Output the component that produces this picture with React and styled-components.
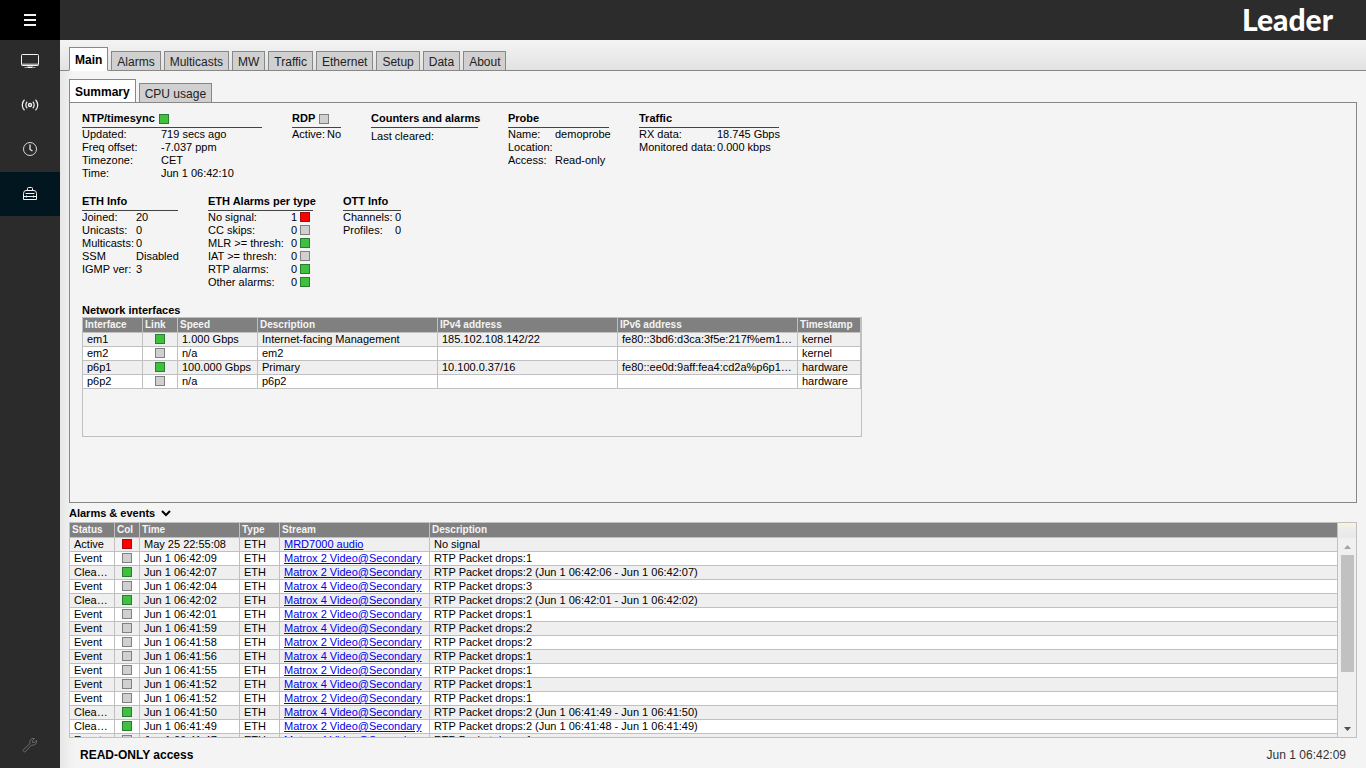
import React from "react";
import styled, { createGlobalStyle, css } from "styled-components";

const GlobalStyle = createGlobalStyle`
  * { box-sizing: border-box; }
  html, body, #root { height: 100%; }
  body {
    margin: 0;
    background: #f4f4f4;
    color: #000;
    font-family: "Liberation Sans", Arial, sans-serif;
    font-size: 11px;
    line-height: 13px;
  }
  button { font: inherit; color: inherit; border: 0; padding: 0; background: none; cursor: pointer; }
`;

const Shell = styled.div`
  display: flex;
  height: 100vh;
`;

const Sidebar = styled.nav`
  display: flex;
  flex-direction: column;
  flex: none;
  width: 60px;
  background: #2b2b2b;
`;

const SideButton = styled.button`
  display: flex;
  align-items: center;
  justify-content: center;
  height: ${(p) => (p.$menu ? 40 : 44)}px;
  padding-bottom: ${(p) => (p.$menu ? 0 : 2)}px;
  background: ${(p) => (p.$menu ? "#000" : p.$active ? "#02161f" : "transparent")};
  color: ${(p) => (p.$dim ? "#6e6e6e" : "#f4f4f4")};
  svg { display: block; }
`;

const Spacer = styled.div`
  flex: 1;
`;

const Column = styled.div`
  display: flex;
  flex-direction: column;
  flex: 1;
  min-width: 0;
`;

const TopBar = styled.header`
  display: flex;
  align-items: flex-start;
  justify-content: flex-end;
  flex: none;
  height: 40px;
  padding-right: 33px;
  background: #2c2c2c;
`;

const Logo = styled.span`
  font-family: Lato, sans-serif;
  font-size: 30px;
  line-height: 38px;
  font-weight: 900;
  color: #fff;
`;

const Page = styled.div`
  display: flex;
  flex-direction: column;
  flex: 1;
  min-height: 0;
  background: linear-gradient(to right, #e6e6e6, #f4f4f4 14px);
`;

const TabBar = styled.div`
  display: flex;
  align-items: flex-end;
  gap: 3px;
  flex: none;
`;

const MainTabs = styled(TabBar)`
  height: 31px;
  padding: 0 9px;
  border-bottom: 1px solid #888;
  background: linear-gradient(#f4f4f4, #e2e2e2);
`;

const SubTabs = styled(TabBar)`
  margin-top: 8px;
`;

const Tab = styled.button`
  height: 20px;
  margin-bottom: -1px;
  padding: 2px 5px 0;
  border: 1px solid #888;
  background: #d0d0d0;
  color: #222;
  font-size: 12px;
  line-height: 16px;
  ${(p) =>
    p.$active &&
    css`
      height: 24px;
      padding-bottom: 1px;
      border-bottom-color: #fff;
      background: #fff;
      color: #000;
      font-weight: 700;
    `}
`;

const Body = styled.main`
  display: flex;
  flex-direction: column;
  flex: 1;
  min-height: 0;
  padding: 0 9px;
`;

const Panel = styled.section`
  flex: none;
  min-height: 401px;
  padding: 9px 12px;
  border: 1px solid #888;
  background: #f4f4f4;
`;

const GroupRow = styled.div`
  display: flex;
  align-items: flex-start;
  gap: 30px;
  margin-bottom: 15px;
`;

const Group = styled.section`
  flex: none;
  width: ${(p) => p.$width}px;
`;

const Heading = styled.h2`
  display: flex;
  align-items: center;
  gap: 4px;
  margin: 0;
  font-size: 11px;
  line-height: 13px;
  font-weight: 700;
  white-space: nowrap;
`;

const GroupHeading = styled(Heading)`
  padding-bottom: 2px;
  border-bottom: 1px solid #444;
`;

const Pairs = styled.dl`
  display: grid;
  grid-template-columns: ${(p) => p.$label}px 1fr;
  margin: 0;
  padding-top: ${(p) => p.$top || 0}px;
  dt, dd { margin: 0; min-height: 13px; white-space: nowrap; }
`;

const lampColors = {
  green: ["#3fc13f", "#2a7d2e"],
  grey: ["#d0d0d0", "#808080"],
  red: ["#ff0000", "#a01010"],
};

const Lamp = styled.span`
  display: block;
  flex: none;
  width: 10px;
  height: 10px;
  border: 1px solid ${(p) => lampColors[p.$color][1]};
  background: ${(p) => lampColors[p.$color][0]};
`;

const Count = styled.dd`
  display: flex;
  align-items: flex-start;
  justify-content: flex-end;
  gap: 3px;
  padding-right: 3px;
  ${Lamp} { margin-top: 1px; }
`;

const Table = styled.table`
  width: 100%;
  table-layout: fixed;
  border-collapse: separate;
  border-spacing: 0;

  th, td {
    overflow: hidden;
    text-align: left;
    vertical-align: top;
    text-overflow: ellipsis;
    white-space: nowrap;
    border: solid #c0c0c0;
    border-width: 0 1px 1px 0;
  }
  th {
    height: 15px;
    padding: 0 2px;
    background: #808080;
    color: #f4f4f4;
    font-size: 10px;
    line-height: 13px;
    font-weight: 700;
  }
  td {
    height: 14px;
    padding: 0 4px;
    line-height: 13px;
  }
  tbody tr { background: #fff; }
  tbody tr:nth-child(odd) { background: #efefef; }
  td ${Lamp} { margin: 1px auto 0; }
  a { color: #0000ee; }
`;

const InterfaceBox = styled.div`
  max-width: 780px;
  min-height: 120px;
  border: 1px solid #c0c0c0;
`;

const EventsHeading = styled(Heading)`
  flex: none;
  height: 19px;
  gap: 6px;
  padding-top: 2px;
`;

const EventsBox = styled.div`
  display: flex;
  flex: 1;
  min-height: 0;
  border: 1px solid #c0c0c0;
`;

const EventsView = styled.div`
  flex: 1;
  min-width: 0;
  overflow: hidden;
`;

const ScrollColumn = styled.div`
  display: flex;
  flex-direction: column;
  flex: none;
  width: 18px;
  background: #f0f0f0;
`;

const ScrollCorner = styled.div`
  height: 15px;
  background: linear-gradient(#fdf3dd, #ececec 6px, #e8e8e8);
`;

const ScrollButton = styled.button`
  display: flex;
  align-items: center;
  justify-content: center;
  height: 17px;
  color: ${(p) => (p.$dim ? "#a3a3a3" : "#505050")};
`;

const Track = styled.div`
  flex: 1;
  padding: 0 2px 0 3px;
`;

const Thumb = styled.div`
  height: 71%;
  background: #c1c1c1;
`;

const Footer = styled.footer`
  display: flex;
  align-items: center;
  justify-content: space-between;
  flex: none;
  height: 30px;
  padding: 5px 20px 0;
  font-size: 12px;
  line-height: 15px;
  color: #333;
  strong { color: #000; }
`;

const stroke = { fill: "none", stroke: "currentColor", strokeWidth: 1 };

const MenuIcon = () => (
  <svg width="12" height="12" viewBox="0 0 12 12" aria-hidden="true">
    <path d="M0 1h12M0 6h12M0 11h12" stroke="currentColor" strokeWidth="2" />
  </svg>
);

const MonitorIcon = () => (
  <svg width="18" height="16" viewBox="0 0 18 16" aria-hidden="true">
    <rect x="0.5" y="1.5" width="17" height="11" rx="0.8" {...stroke} />
    <path d="M1 11.5h16" stroke="currentColor" strokeOpacity="0.6" strokeWidth="2" />
    <path d="M6 13.5h6" stroke="currentColor" strokeOpacity="0.4" />
    <path d="M3.500 14.5h11" stroke="currentColor" strokeOpacity="0.6" />
    <path d="M7 14.5h4" stroke="currentColor" />
  </svg>
);

const SignalIcon = () => (
  <svg width="18" height="14" viewBox="0 0 18 14" aria-hidden="true">
    <circle cx="9" cy="7" r="1.5" {...stroke} strokeWidth="1.4" />
    <path d="M6.2 3.8a4.4 4.4 0 0 0 0 6.4M11.8 3.8a4.4 4.4 0 0 1 0 6.4M3.5 1.7a7.4 7.4 0 0 0 0 10.6M14.5 1.7a7.4 7.4 0 0 1 0 10.6" {...stroke} strokeWidth="1.2" />
  </svg>
);

const ClockIcon = () => (
  <svg width="16" height="16" viewBox="0 0 16 16" aria-hidden="true">
    <circle cx="8" cy="8" r="6.5" {...stroke} strokeOpacity="0.85" />
    <path d="M8 3.5v5l2.5 1.500" {...stroke} strokeWidth="1.2" />
  </svg>
);

const ToolboxIcon = () => (
  <svg width="16" height="16" viewBox="0 0 16 16" aria-hidden="true">
    <path d="M5.5 5V3.5q0-1 1-1h3q1 0 1 1V5M4 5.5h8q2.500 0 2.500 3v6h-13v-6q0-3 2.500-3zM3.500 8.500h9M1.500 11.500h13M4.500 10.500v2M11.500 10.500v2" {...stroke} />
  </svg>
);

const WrenchIcon = () => (
  <svg width="16" height="16" viewBox="0 0 16 16" aria-hidden="true">
    <path d="M12.6 1.5a3.8 3.8 0 0 0-4.6 5L1.6 12.4a1.4 1.4 0 0 0 2 2L9.6 8a3.8 3.8 0 0 0 4.9-4.6L12.3 5.5 10.5 5.3 10.4 3.7z" {...stroke} />
  </svg>
);

const ChevronIcon = () => (
  <svg width="10" height="7" viewBox="0 0 10 7" aria-hidden="true">
    <path d="M1 1l4 4 4-4" fill="none" stroke="currentColor" strokeWidth="2" />
  </svg>
);

const Arrow = ({ down }) => (
  <svg width="7" height="4" viewBox="0 0 7 4" aria-hidden="true">
    <path d={down ? "M0 0h7L3.5 4z" : "M0 4h7L3.5 0z"} fill="currentColor" />
  </svg>
);

const mainTabs = ["Main", "Alarms", "Multicasts", "MW", "Traffic", "Ethernet", "Setup", "Data", "About"];

const alarmCounts = [
  ["No signal:", 1, "red"],
  ["CC skips:", 0, "grey"],
  ["MLR >= thresh:", 0, "green"],
  ["IAT >= thresh:", 0, "grey"],
  ["RTP alarms:", 0, "green"],
  ["Other alarms:", 0, "green"],
];

const interfaces = [
  ["em1", "green", "1.000 Gbps", "Internet-facing Management", "185.102.108.142/22", "fe80::3bd6:d3ca:3f5e:217f%em1/64", "kernel"],
  ["em2", "grey", "n/a", "em2", "", "", "kernel"],
  ["p6p1", "green", "100.000 Gbps", "Primary", "10.100.0.37/16", "fe80::ee0d:9aff:fea4:cd2a%p6p1/64", "hardware"],
  ["p6p2", "grey", "n/a", "p6p2", "", "", "hardware"],
];

const m2 = "Matrox 2 Video@Secondary";
const m4 = "Matrox 4 Video@Secondary";

const events = [
  ["Active", "red", "May 25 22:55:08", "MRD7000 audio", "No signal"],
  ["Event", "grey", "Jun 1 06:42:09", m2, "RTP Packet drops:1"],
  ["Cleared", "green", "Jun 1 06:42:07", m2, "RTP Packet drops:2 (Jun 1 06:42:06 - Jun 1 06:42:07)"],
  ["Event", "grey", "Jun 1 06:42:04", m4, "RTP Packet drops:3"],
  ["Cleared", "green", "Jun 1 06:42:02", m4, "RTP Packet drops:2 (Jun 1 06:42:01 - Jun 1 06:42:02)"],
  ["Event", "grey", "Jun 1 06:42:01", m2, "RTP Packet drops:1"],
  ["Event", "grey", "Jun 1 06:41:59", m4, "RTP Packet drops:2"],
  ["Event", "grey", "Jun 1 06:41:58", m2, "RTP Packet drops:2"],
  ["Event", "grey", "Jun 1 06:41:56", m4, "RTP Packet drops:1"],
  ["Event", "grey", "Jun 1 06:41:55", m2, "RTP Packet drops:1"],
  ["Event", "grey", "Jun 1 06:41:52", m4, "RTP Packet drops:1"],
  ["Event", "grey", "Jun 1 06:41:52", m2, "RTP Packet drops:1"],
  ["Cleared", "green", "Jun 1 06:41:50", m4, "RTP Packet drops:2 (Jun 1 06:41:49 - Jun 1 06:41:50)"],
  ["Cleared", "green", "Jun 1 06:41:49", m2, "RTP Packet drops:2 (Jun 1 06:41:48 - Jun 1 06:41:49)"],
  ["Event", "grey", "Jun 1 06:41:47", m4, "RTP Packet drops:1"],
];

const InfoGroup = ({ title, lamp, width, label, top, rows }) => (
  <Group $width={width}>
    <GroupHeading>
      {title}
      {lamp && <Lamp $color={lamp} />}
    </GroupHeading>
    <Pairs $label={label} $top={top}>
      {rows.map(([name, value]) => (
        <React.Fragment key={name}>
          <dt>{name}</dt>
          <dd>{value}</dd>
        </React.Fragment>
      ))}
    </Pairs>
  </Group>
);

const TableHead = ({ columns }) => (
  <>
    <colgroup>
      {columns.map(([name, width]) => (
        <col key={name} width={width} />
      ))}
    </colgroup>
    <thead>
      <tr>
        {columns.map(([name]) => (
          <th key={name} scope="col">{name}</th>
        ))}
      </tr>
    </thead>
  </>
);

export default function App() {
  return (
    <>
      <GlobalStyle />
      <Shell>
        <Sidebar>
          <SideButton $menu aria-label="Menu"><MenuIcon /></SideButton>
          <SideButton aria-label="Monitor"><MonitorIcon /></SideButton>
          <SideButton aria-label="Signals"><SignalIcon /></SideButton>
          <SideButton aria-label="History"><ClockIcon /></SideButton>
          <SideButton $active aria-label="Tools"><ToolboxIcon /></SideButton>
          <Spacer />
          <SideButton $dim aria-label="Settings"><WrenchIcon /></SideButton>
        </Sidebar>
        <Column>
          <TopBar><Logo>Leader</Logo></TopBar>
          <Page>
            <MainTabs role="tablist">
              {mainTabs.map((name, i) => (
                <Tab key={name} role="tab" aria-selected={i === 0} $active={i === 0}>{name}</Tab>
              ))}
            </MainTabs>
            <Body>
              <SubTabs role="tablist">
                <Tab role="tab" aria-selected $active>Summary</Tab>
                <Tab role="tab" aria-selected={false}>CPU usage</Tab>
              </SubTabs>
              <Panel>
                <GroupRow>
                  <InfoGroup
                    title="NTP/timesync"
                    lamp="green"
                    width={180}
                    label={79}
                    rows={[["Updated:", "719 secs ago"], ["Freq offset:", "-7.037 ppm"], ["Timezone:", "CET"], ["Time:", "Jun 1 06:42:10"]]}
                  />
                  <InfoGroup title="RDP" lamp="grey" width={49} label={35} rows={[["Active:", "No"]]} />
                  <InfoGroup title="Counters and alarms" width={107} label={65} top={2} rows={[["Last cleared:", ""]]} />
                  <InfoGroup title="Probe" width={101} label={47} rows={[["Name:", "demoprobe"], ["Location:", ""], ["Access:", "Read-only"]]} />
                  <InfoGroup title="Traffic" width={140} label={78} rows={[["RX data:", "18.745 Gbps"], ["Monitored data:", "0.000 kbps"]]} />
                </GroupRow>
                <GroupRow>
                  <InfoGroup
                    title="ETH Info"
                    width={96}
                    label={54}
                    rows={[["Joined:", "20"], ["Unicasts:", "0"], ["Multicasts:", "0"], ["SSM", "Disabled"], ["IGMP ver:", "3"]]}
                  />
                  <Group $width={105}>
                    <GroupHeading>ETH Alarms per type</GroupHeading>
                    <Pairs $label={79}>
                      {alarmCounts.map(([label, count, color]) => (
                        <React.Fragment key={label}>
                          <dt>{label}</dt>
                          <Count>{count}<Lamp $color={color} /></Count>
                        </React.Fragment>
                      ))}
                    </Pairs>
                  </Group>
                  <InfoGroup title="OTT Info" width={58} label={52} rows={[["Channels:", "0"], ["Profiles:", "0"]]} />
                </GroupRow>
                <Heading>Network interfaces</Heading>
                <InterfaceBox>
                  <Table>
                    <TableHead
                      columns={[["Interface", 60], ["Link", 35], ["Speed", 80], ["Description", 180], ["IPv4 address", 180], ["IPv6 address", 180], ["Timestamp"]]}
                    />
                    <tbody>
                      {interfaces.map(([name, link, ...rest]) => (
                        <tr key={name}>
                          <td>{name}</td>
                          <td><Lamp $color={link} role="img" aria-label={link === "green" ? "up" : "down"} /></td>
                          {rest.map((text, i) => (
                            <td key={i}>{text}</td>
                          ))}
                        </tr>
                      ))}
                    </tbody>
                  </Table>
                </InterfaceBox>
              </Panel>
              <EventsHeading>
                Alarms &amp; events
                <button aria-label="Collapse"><ChevronIcon /></button>
              </EventsHeading>
              <EventsBox>
                <EventsView>
                  <Table>
                    <TableHead
                      columns={[["Status", 45], ["Col", 25], ["Time", 100], ["Type", 40], ["Stream", 150], ["Description"]]}
                    />
                    <tbody>
                      {events.map(([status, color, time, stream, text], i) => (
                        <tr key={i}>
                          <td>{status}</td>
                          <td><Lamp $color={color} /></td>
                          <td>{time}</td>
                          <td>ETH</td>
                          <td><a href="#stream">{stream}</a></td>
                          <td>{text}</td>
                        </tr>
                      ))}
                    </tbody>
                  </Table>
                </EventsView>
                <ScrollColumn>
                  <ScrollCorner />
                  <ScrollButton $dim aria-label="Scroll up"><Arrow /></ScrollButton>
                  <Track><Thumb /></Track>
                  <ScrollButton aria-label="Scroll down"><Arrow down /></ScrollButton>
                </ScrollColumn>
              </EventsBox>
            </Body>
            <Footer>
              <strong>READ-ONLY access</strong>
              <span>Jun 1 06:42:09</span>
            </Footer>
          </Page>
        </Column>
      </Shell>
    </>
  );
}
